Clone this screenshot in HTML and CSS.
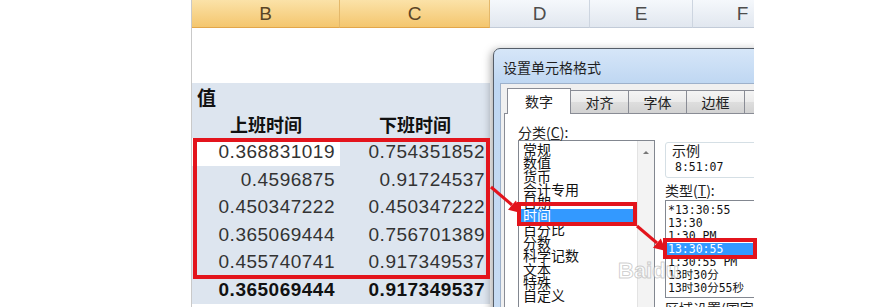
FILE: index.html
```html
<!DOCTYPE html>
<html lang="zh-CN">
<head>
  <meta charset="UTF-8" />
  <title>设置单元格格式</title>
  <link rel="stylesheet" href="styles.css">
</head>
<body>
  <div class="page">
    <div class="gutter"></div>

    <!-- spreadsheet -->
    <div class="sheet">
      <div class="col-heads">
        <div class="col-head sel w-b">B</div>
        <div class="col-head sel w-c">C</div>
        <div class="col-head w-d">D</div>
        <div class="col-head w-e">E</div>
        <div class="col-head w-f">F</div>
      </div>

      <div class="blank"></div>
      <div class="blank"></div>
      <div class="row picked">
        <div class="cell w-b title-cell">值</div>
        <div class="cell w-c"></div>
      </div>
      <div class="row picked">
        <div class="cell w-b head-cell">上班时间</div>
        <div class="cell w-c head-cell">下班时间</div>
      </div>
      <div class="row picked">
        <div class="cell w-b active">0.368831019</div>
        <div class="cell w-c">0.754351852</div>
      </div>
      <div class="row picked">
        <div class="cell w-b">0.4596875</div>
        <div class="cell w-c">0.91724537</div>
      </div>
      <div class="row picked">
        <div class="cell w-b">0.450347222</div>
        <div class="cell w-c">0.450347222</div>
      </div>
      <div class="row picked">
        <div class="cell w-b">0.365069444</div>
        <div class="cell w-c">0.756701389</div>
      </div>
      <div class="row picked">
        <div class="cell w-b">0.455740741</div>
        <div class="cell w-c">0.917349537</div>
      </div>
      <div class="row picked total">
        <div class="cell w-b">0.365069444</div>
        <div class="cell w-c">0.917349537</div>
      </div>

      <!-- format cells dialog -->
      <div class="dialog">
        <div class="dialog-title">设置单元格格式</div>
        <div class="dialog-body">
          <div class="tabs">
            <div class="tab current">数字</div>
            <div class="tab">对齐</div>
            <div class="tab">字体</div>
            <div class="tab">边框</div>
            <div class="tab">填充</div>
          </div>
          <div class="panel">
            <div class="category">
              <div class="label">分类(<u>C</u>):</div>
              <div class="listbox">
                <div class="items">
                  <div>常规</div>
                  <div>数值</div>
                  <div>货币</div>
                  <div>会计专用</div>
                  <div>日期</div>
                  <div class="chosen">时间</div>
                  <div>百分比</div>
                  <div>分数</div>
                  <div>科学记数</div>
                  <div>文本</div>
                  <div>特殊</div>
                  <div>自定义</div>
                </div>
                <div class="scroll"><span class="up"></span></div>
              </div>
            </div>
            <div class="detail">
              <div class="sample">
                <div class="sample-label">示例</div>
                <div class="sample-value">8:51:07</div>
              </div>
              <div class="label">类型(<u>T</u>):</div>
              <div class="typebox">
                <div>*13:30:55</div>
                <div>13:30</div>
                <div>1:30 PM</div>
                <div class="chosen">13:30:55</div>
                <div>1:30:55 PM</div>
                <div>13时30分</div>
                <div>13时30分55秒</div>
              </div>
              <div class="label">区域设置(国家/地区)(<u>L</u>):</div>
            </div>
          </div>
        </div>
      </div>
    </div>

    <!-- red marks drawn over the screenshot -->
    <svg class="marks" width="893" height="307" viewBox="0 0 893 307">
      <text class="watermark" x="618" y="278">Baidu</text>
      <rect x="195" y="140" width="293" height="137" />
      <rect x="519" y="204" width="116" height="20" />
      <rect x="665" y="240" width="90" height="17" />
      <line x1="491" y1="187" x2="512" y2="205" />
      <polygon points="521,213 515.9,200.6 508,209.7" />
      <line x1="637" y1="226" x2="657" y2="243" />
      <polygon points="666,251 660.8,238.6 653,247.7" />
    </svg>
  </div>
</body>
</html>
```

FILE: styles.css
```css
* {
  box-sizing: border-box;
}

body {
  margin: 0;
  background: #ffffff;
  font-family: "Liberation Sans", "Noto Sans CJK SC", sans-serif;
  color: #222;
}

.page {
  position: relative;
  display: flex;
  width: 893px;
  height: 307px;
  overflow: hidden;
}

.gutter {
  flex: none;
  width: 191px;
}

/* spreadsheet */
.sheet {
  position: relative;
  flex: none;
  width: 563px;
  height: 307px;
  border-left: 1px solid #c9c9c9;
  overflow: hidden;
}

.w-b { width: 148px; }
.w-c { width: 150px; }
.w-d { width: 100px; }
.w-e { width: 103px; }
.w-f { width: 100px; }

.col-heads {
  display: flex;
  height: 28px;
}

.col-head {
  flex: none;
  display: flex;
  align-items: center;
  justify-content: center;
  height: 28px;
  font-size: 19px;
  color: #4d4d4d;
  background: linear-gradient(#f5f8fc, #e1e7ef);
  border-right: 1px solid #cdd5e0;
  border-bottom: 1px solid #c2cbd8;
}

.col-head.sel {
  color: #5a4526;
  background: linear-gradient(#fbe2a8, #f4c66e);
  border-right-color: #e4b86a;
  border-bottom-color: #e2a64a;
}

.blank {
  height: 27.5px;
}

.row {
  display: flex;
  height: 27.6px;
}

.cell {
  flex: none;
  display: flex;
  align-items: center;
  justify-content: flex-end;
  height: 100%;
  padding-right: 5px;
  font-size: 19px;
  letter-spacing: 0.5px;
  color: #333;
}

.row.picked .cell {
  background: #dde5ef;
}

.row.picked .cell.active {
  background: #ffffff;
}

.cell.title-cell {
  justify-content: flex-start;
  padding-left: 5px;
  font-weight: bold;
  color: #111;
}

.cell.head-cell {
  justify-content: center;
  padding-right: 0;
  font-size: 18px;
  font-weight: bold;
  letter-spacing: 0;
  color: #111;
}

.row.total .cell {
  font-weight: bold;
  color: #111;
}

/* dialog */
.dialog {
  position: absolute;
  left: 301px;
  top: 48px;
  width: 320px;
  height: 290px;
  background: linear-gradient(#d6e6f8, #bfd7f2 34px, #c8dcf3);
  border: 1px solid #555d68;
  border-radius: 7px 7px 0 0;
  box-shadow: -2px 2px 8px rgba(0, 0, 0, 0.35);
  font-family: "Noto Sans CJK SC", sans-serif;
}

.dialog-title {
  height: 34px;
  padding: 3px 0 0 9px;
  line-height: 31px;
  font-size: 14px;
  color: #1f1f1f;
}

.dialog-body {
  height: 260px;
  margin-left: 6px;
  padding: 4px 0 0 3px;
  background: #f0f0f0;
  border: 1px solid #9db1cb;
}

.tabs {
  position: relative;
  z-index: 1;
  display: flex;
  align-items: flex-end;
  height: 25px;
  margin-left: 3px;
}

.tab {
  flex: none;
  width: 59px;
  height: 23px;
  margin-right: -1px;
  line-height: 22px;
  text-align: center;
  font-size: 14px;
  color: #222;
  background: linear-gradient(#f4f4f4, #ebebeb 50%, #dedede 51%, #d2d2d2);
  border: 1px solid #898c95;
  border-bottom: none;
}

.tab.current {
  width: 64px;
  height: 26px;
  margin-bottom: -1px;
  line-height: 25px;
  background: #ffffff;
}

.panel {
  display: flex;
  height: 220px;
  padding: 10px 0 0 13px;
  background: #ffffff;
  border: 1px solid #898c95;
}

.label {
  height: 16px;
  line-height: 16px;
  font-size: 14px;
  color: #222;
  white-space: nowrap;
}

.category {
  flex: none;
  width: 137px;
}

.listbox {
  display: flex;
  height: 200px;
  background: #ffffff;
  border: 1px solid #828790;
}

.items {
  flex: 1;
  padding-top: 2px;
  font-size: 14px;
  line-height: 13.3px;
  color: #111;
}

.items div {
  padding-left: 4px;
}

.items .chosen,
.typebox .chosen {
  background: #3399ff;
  color: #ffffff;
}

.scroll {
  flex: none;
  width: 17px;
  background: #f3f3f3;
  border-left: 1px solid #e3e3e3;
  padding: 10px 0 0 5px;
}

.scroll .up {
  display: block;
  width: 0;
  height: 0;
  border-left: 3px solid transparent;
  border-right: 3px solid transparent;
  border-bottom: 3px solid #777;
}

.detail {
  flex: none;
  width: 120px;
  margin-left: 10px;
}

.sample {
  height: 36px;
  margin-top: 18px;
  margin-bottom: 4px;
  padding-left: 6px;
  border: 1px solid #d5dfe5;
  border-radius: 3px;
}

.sample-label {
  line-height: 14px;
  font-size: 14px;
  color: #222;
}

.sample-value {
  margin-top: 3px;
  padding-left: 3px;
  line-height: 14px;
  font-family: "DejaVu Sans Mono", "Noto Sans CJK SC", monospace;
  font-size: 11.5px;
  color: #111;
}

.typebox {
  height: 98px;
  margin-top: 2px;
  margin-bottom: 2px;
  padding-top: 2.5px;
  border: 1px solid #828790;
  font-family: "DejaVu Sans Mono", "Noto Sans CJK SC", monospace;
  font-size: 11.5px;
  line-height: 13px;
  color: #111;
  white-space: nowrap;
}

.typebox div {
  padding-left: 2px;
}

/* annotations */
.marks {
  position: absolute;
  left: 0;
  top: 0;
  pointer-events: none;
}

.marks rect {
  fill: none;
  stroke: #e3141c;
  stroke-width: 4;
}

.marks line {
  stroke: #e3141c;
  stroke-width: 3;
}

.marks polygon {
  fill: #e3141c;
}

.marks .watermark {
  font-family: "Liberation Sans", sans-serif;
  font-size: 22px;
  font-weight: bold;
  fill: rgba(255, 255, 255, 0.55);
  stroke: rgba(150, 150, 150, 0.45);
  stroke-width: 1;
}
```
